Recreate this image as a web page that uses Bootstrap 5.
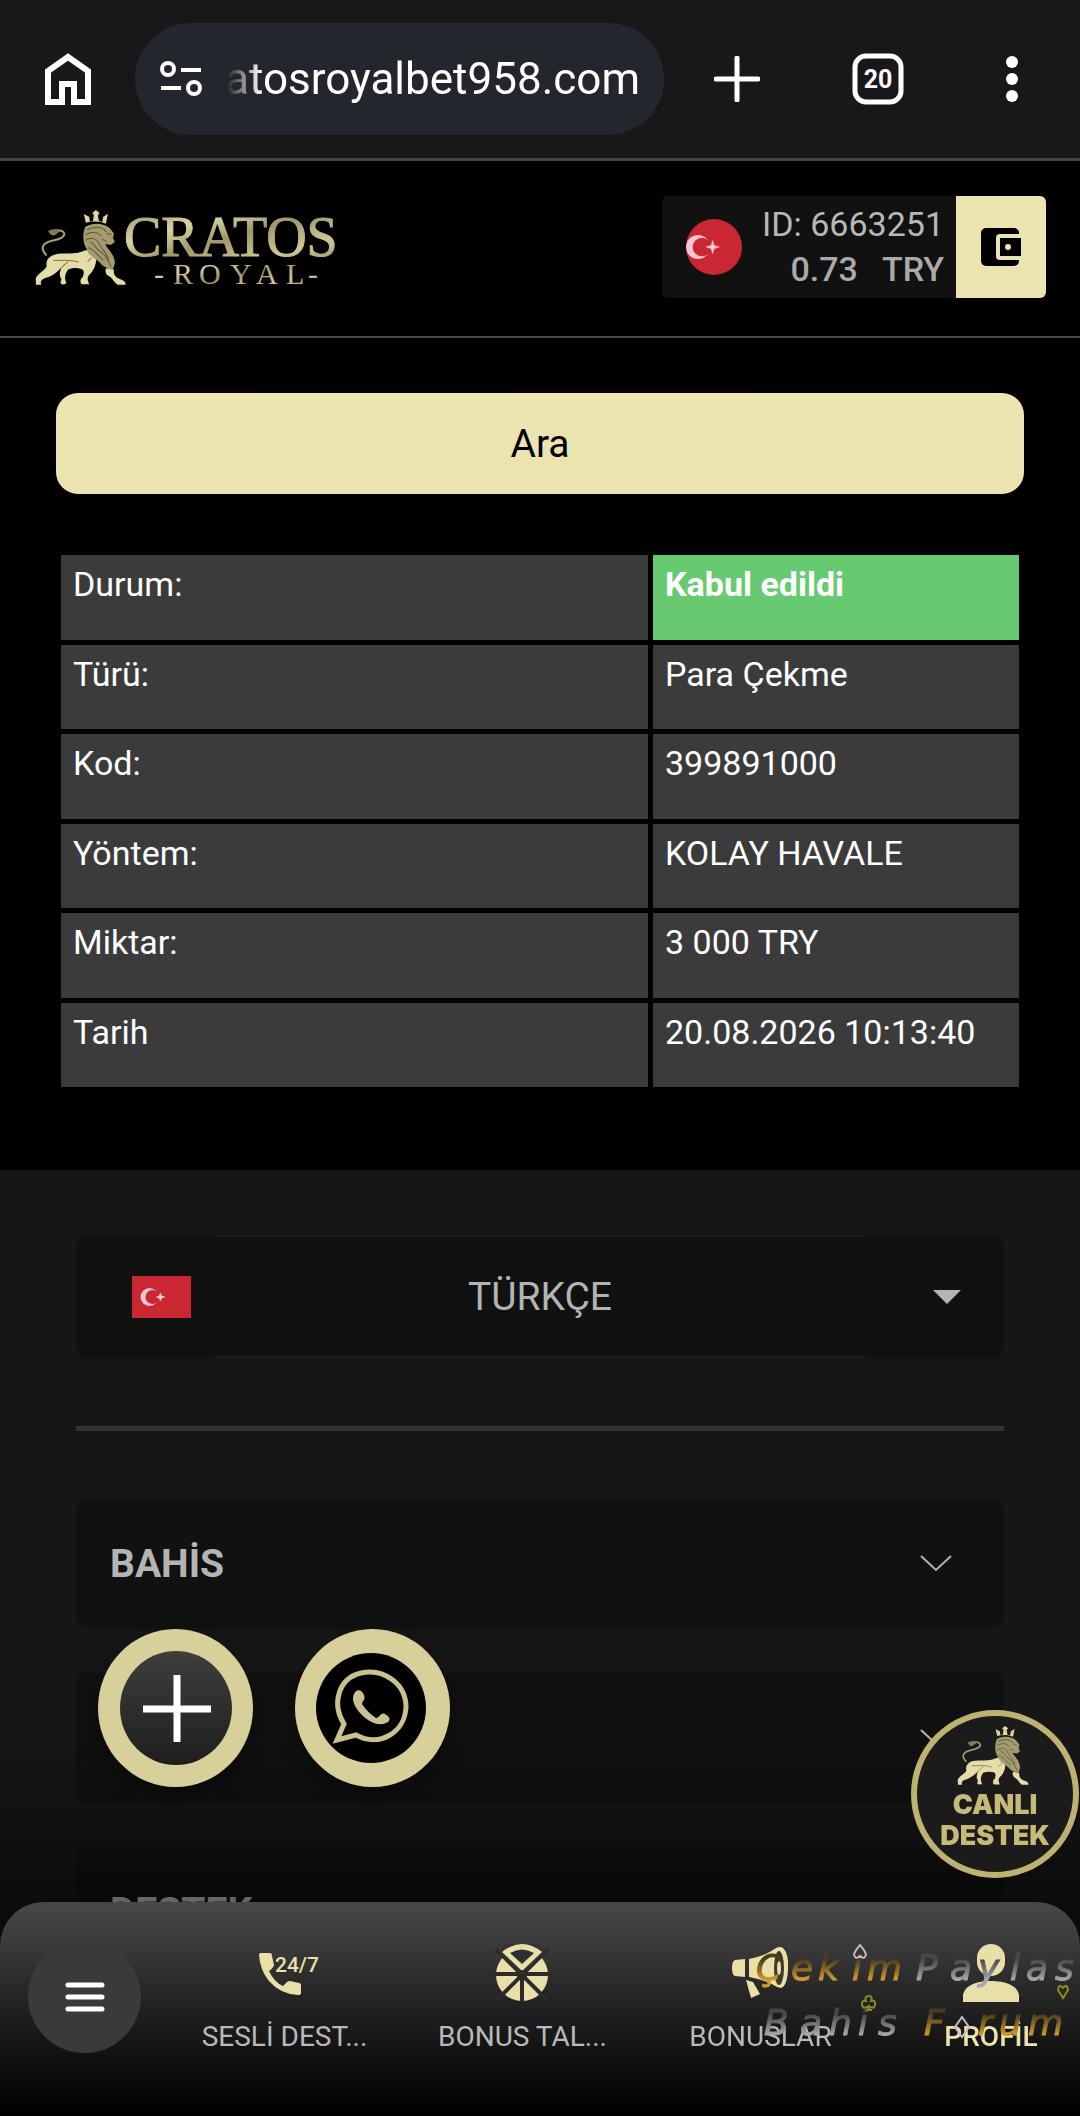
<!DOCTYPE html>
<html lang="tr">
<head>
<meta charset="utf-8">
<meta name="viewport" content="width=device-width, initial-scale=1">
<title>Cratos Royal</title>
<link href="https://cdn.jsdelivr.net/npm/bootstrap@5.3.0/dist/css/bootstrap.min.css" rel="stylesheet">
<style>
  body { background: #161616; font-family: Roboto, "Liberation Sans", sans-serif; color: #b4b4b4; }
  svg { display: block; flex: none; }
  button, .plain-input { border: 0; padding: 0; background: none; color: inherit; }

  /* browser bar */
  .browser-bar { height: 161px; padding: 0 61px 0 45px; background: #18181b; border-bottom: 3px solid #454547; color: #fff; }
  .address { height: 112px; margin-left: 44px; padding: 0 24px; border-radius: 56px; background: #24262e; flex: 0 1 529px; min-width: 0; gap: 14px; }
  .address input { font-size: 44px; line-height: 56px; color: #fff; outline: 0; min-width: 0; text-align: right;
    -webkit-mask-image: linear-gradient(90deg, transparent 10px, #000 44px); mask-image: linear-gradient(90deg, transparent 10px, #000 44px); }
  .browser-tools { flex: 1; margin-left: 50px; }
  .tab-count { margin-right: 10px; }

  /* site header */
  .site-head { background: #000; height: 177px; padding: 0 34px 4px; border-bottom: 2px solid #48484a; }
  .account { height: 102px; border-radius: 6px; overflow: hidden; background: #111; color: #b8b8b8; }
  .account-main { gap: 20px; }
  .account-id { font-size: 34px; line-height: 45px; }
  .account-id b { font-weight: 500; color: #aaa; }
  .wallet { width: 90px; background: #ebe4b0; color: #000; }

  /* history */
  .history { background: #000; padding: 55px 56px 78px; }
  .search-btn { height: 101px; border-radius: 22px; background: linear-gradient(#efe6b0, #ebe4b0 30%); color: #000; font-size: 39px; line-height: 48px; }
  .detail-grid { width: 100%; height: 542px; margin-top: 56px; border-collapse: separate; border-spacing: 5px; color: #fff; font-size: 34px; line-height: 40px; }
  .detail-grid th, .detail-grid td { background: #3b3b3b; padding: 9px 12px; vertical-align: top; font-weight: 400; }
  .detail-grid th { width: 587px; }
  .detail-grid td.accepted { background: #68ca70; font-weight: 700; }

  /* menu */
  .menu-area { padding: 65px 76px 141px; }
  .lang { width: 100%; height: 123px; border-radius: 8px; background: #111; overflow: hidden; font-size: 39px; line-height: 48px; }
  .lang-side { width: 139px; }
  .lang-name { border: solid #1e1e1e; border-width: 2px 0; }
  .menu-rule { height: 5px; margin: 68px 0; border: 0; background: #333; opacity: 1; }
  .fold { width: 100%; height: 129px; margin-bottom: 45px; padding: 0 52px 0 34px; border-radius: 8px; background: #111; font-size: 39px; line-height: 48px; font-weight: 700; }
  .fold:last-child { margin-bottom: 0; }

  /* floating layer */
  .fade-out { left: 0; right: 0; bottom: 170px; height: 200px; background: linear-gradient(transparent, rgba(0,0,0,.45) 80%); pointer-events: none; }
  .floaters { left: 98px; bottom: 329px; gap: 42px; z-index: 2; }
  .round-btn { width: 155px; height: 158px; border-radius: 50%; background: #d8d09a; box-shadow: 0 8px 20px rgba(0,0,0,.4); }
  .live-help { right: 0; bottom: 237px; z-index: 3; }

  .dock { height: 214px; padding: 38px 12px 62px 28px; border-radius: 44px 44px 0 0; background: linear-gradient(#484848 0, #3a3a3a 20%, #242424 45%, #111 72%, #000 100%); }
  .menu-btn { width: 113px; height: 113px; border-radius: 50%; background: #3a3a3a; flex: none; }
  .dock-items { margin: 4px 0 0 60px; gap: 70px; }
  .dock-items a { flex: 0 1 167px; color: #b9b9b9; font-size: 28px; line-height: 36px; text-decoration: none; white-space: nowrap; }
  .dock-items a:last-child { flex: 1 1 0; color: #ebe4b0; font-weight: 500; }
  .dock-items svg { margin-bottom: 17px; color: #e8e0a8; }
  .stamp { right: 0; bottom: 28px; z-index: 1040; pointer-events: none; }
</style>
</head>
<body>

<svg width="0" height="0" class="position-absolute" aria-hidden="true">
  <defs>
    <linearGradient id="gold" x1="0" y1="0" x2="1" y2="1">
      <stop offset="0" stop-color="#8e8762"/><stop offset=".3" stop-color="#d9d2a2"/><stop offset=".5" stop-color="#a0986c"/><stop offset=".75" stop-color="#cfc793"/><stop offset="1" stop-color="#958d66"/>
    </linearGradient>
    <symbol id="lion" viewBox="45 60 272 224">
      <path d="M78 194C58 172 70 158 96 152C122 147 138 138 131 127C124 118 108 120 100 124" fill="none" stroke="#aaa27a" stroke-width="6" stroke-linecap="round"/>
      <path d="M84 124C94 115 114 116 122 124C112 126 105 140 94 135C88 132 90 128 84 124Z" fill="#807a58"/>
      <path d="M192 182C165 195 130 187 105 193C84 199 76 214 80 228C74 243 50 250 47 266L48 283H64C58 273 68 264 84 261C105 253 116 240 124 232C119 246 116 256 124 266L121 277C126 285 135 283 139 278C132 265 134 250 145 237C160 233 170 232 183 236C195 240 190 252 188 260C181 263 178 275 184 282H207C203 272 199 263 207 254C219 243 228 226 228 205L215 176Z" fill="#e4dda8"/>
      <path d="M257 234L281 238C278 253 287 263 302 268C312 271 316 277 316 283H292C284 280 279 267 268 259C259 254 253 247 257 234Z" fill="#e4dda8"/>
      <path d="M195 110C222 95 252 100 268 114L281 130L278 145L284 155L273 164L255 162C262 178 283 190 284 220C279 228 281 235 275 240C263 233 249 232 239 217C224 203 205 198 199 176C187 158 187 131 195 110Z" fill="#a39b6e"/>
      <path d="M202 118C230 107 248 112 258 125M198 133C218 122 233 126 242 137M197 150C215 139 230 146 236 159C244 178 260 187 264 207M205 173C217 176 230 192 248 208M211 155C225 163 228 178 244 187C258 197 265 213 272 228M246 148L259 153M261 130L272 133" fill="none" stroke="#5b5640" stroke-width="3" stroke-linecap="round"/>
      <path d="M197 98L191 72L207 80L209 94L218 93L221 75L216 69L227 60L238 69L233 76L236 93L246 96L249 80L263 71L257 101C238 93 216 93 197 98Z" fill="#ddd5a3"/>
      <path d="M100 211C125 211 150 207 176 216M202 214L214 202M144 214C135 220 130 228 124 232" fill="none" stroke="#7e7753" stroke-width="3"/>
    </symbol>
    <symbol id="flag" viewBox="0 0 60 42" preserveAspectRatio="xMidYMid slice">
      <rect width="60" height="42" fill="#c92833"/>
      <circle cx="18" cy="21" r="9" fill="#f3c6d3"/><circle cx="21" cy="21" r="7" fill="#c92833"/>
      <path d="M25 21l3-1 1-3 1 3 3 1-3 1-1 3-1-3z" fill="#f6dbe1" stroke="#f0b8c4"/>
    </symbol>
    <symbol id="chev" viewBox="0 0 32 18"><path d="M1 1L16 15L31 1" fill="none" stroke="#b4b4b4" stroke-width="2"/></symbol>
  </defs>
</svg>

<div class="browser-bar d-flex align-items-center">
  <button type="button" aria-label="Ana sayfa"><svg width="46" height="52" viewBox="0 0 46 52"><path d="M3 49V18L23 4L43 18V49H29V31H17V49Z" fill="none" stroke="#fff" stroke-width="6"/></svg></button>
  <div class="address d-flex align-items-center">
    <svg width="44" height="38" viewBox="0 0 44 38" fill="none" stroke="#fff" stroke-width="4"><circle cx="9" cy="9" r="6"/><path d="M22 10H42M2 28H22"/><circle cx="35" cy="28" r="6"/></svg>
    <input class="plain-input w-100" type="text" aria-label="Adres" value="atosroyalbet958.com">
  </div>
  <div class="browser-tools d-flex align-items-center justify-content-between">
    <button type="button" aria-label="Yeni sekme"><svg width="46" height="46" viewBox="0 0 46 46"><path d="M23 2V44M2 23H44" stroke="#fff" stroke-width="5" stroke-linecap="round"/></svg></button>
    <button type="button" class="tab-count" aria-label="20 sekme"><svg width="52" height="52" viewBox="0 0 52 52"><rect x="3" y="3" width="46" height="46" rx="11" fill="none" stroke="#fff" stroke-width="5"/><text x="26" y="35" text-anchor="middle" font-size="25" font-weight="700" fill="#fff">20</text></svg></button>
    <button type="button" aria-label="Menü"><svg width="14" height="48" viewBox="0 0 14 48" fill="#fff"><circle cx="7" cy="7" r="6"/><circle cx="7" cy="24" r="6"/><circle cx="7" cy="41" r="6"/></svg></button>
  </div>
</div>

<header class="site-head d-flex align-items-center justify-content-between">
  <a href="#" aria-label="Cratos Royal">
    <svg class="overflow-visible" width="304" height="78" viewBox="0 0 304 78">
      <use href="#lion" x="1" y="2" width="91" height="75"/>
      <g fill="url(#gold)" font-family="Liberation Serif, serif">
        <text x="90" y="48" font-size="56" stroke="url(#gold)">CRATOS</text>
        <text x="120 139 165 196 222 252 274" y="76" font-size="30">-ROYAL-</text>
      </g>
    </svg>
  </a>
  <div class="account d-flex">
    <div class="account-main d-flex align-items-center ps-4">
      <svg class="rounded-circle" width="56" height="56"><use href="#flag" width="56" height="56"/></svg>
      <div class="account-id text-end pe-2">
        <div class="pe-1">ID: 6663251</div>
        <b class="d-flex justify-content-end gap-4 pe-1"><span>0.73</span><span>TRY</span></b>
      </div>
    </div>
    <button type="button" class="wallet d-flex align-items-center justify-content-center" aria-label="Cüzdan">
      <svg width="42" height="38" viewBox="0 0 42 38"><rect x="1" width="38" height="38" rx="5"/><path d="M42 6H20Q16 6 16 10V28Q16 32 20 32H42Z" fill="#ebe4b0"/><path d="M20 10H41V28H20Z"/><circle cx="28" cy="19" r="3" fill="#ebe4b0"/></svg>
    </button>
  </div>
</header>

<main>
  <section class="history">
    <button type="button" class="search-btn w-100 d-block">Ara</button>
    <table class="detail-grid">
      <tr><th scope="row">Durum:</th><td class="accepted">Kabul edildi</td></tr>
      <tr><th scope="row">Türü:</th><td>Para Çekme</td></tr>
      <tr><th scope="row">Kod:</th><td>399891000</td></tr>
      <tr><th scope="row">Yöntem:</th><td>KOLAY HAVALE</td></tr>
      <tr><th scope="row">Miktar:</th><td>3 000 TRY</td></tr>
      <tr><th scope="row">Tarih</th><td>20.08.2026 10:13:40</td></tr>
    </table>
  </section>

  <section class="menu-area">
    <button type="button" class="lang d-flex align-items-stretch">
      <span class="lang-side d-flex align-items-center justify-content-end pe-4"><svg width="59" height="42"><use href="#flag" width="59" height="42"/></svg></span>
      <span class="lang-name flex-fill d-flex align-items-center justify-content-center">TÜRKÇE</span>
      <span class="lang-side d-flex align-items-center justify-content-center"><svg class="ms-4" width="28" height="14" viewBox="0 0 28 14"><path d="M0 0H28L14 14Z" fill="#b4b4b4"/></svg></span>
    </button>
    <hr class="menu-rule">
    <button type="button" class="fold d-flex align-items-center justify-content-between">BAHİS<svg width="32" height="18"><use href="#chev" width="32" height="18"/></svg></button>
    <button type="button" class="fold d-flex align-items-center justify-content-end" aria-label="Menü bölümü"><svg width="32" height="18"><use href="#chev" width="32" height="18"/></svg></button>
    <button type="button" class="fold d-flex align-items-center justify-content-between">DESTEK<svg width="32" height="18"><use href="#chev" width="32" height="18"/></svg></button>
  </section>
</main>

<div class="fade-out position-fixed"></div>

<div class="floaters position-fixed d-flex">
  <button type="button" class="round-btn d-flex align-items-center justify-content-center" aria-label="Ekle">
    <svg width="112" height="114" viewBox="0 0 112 114">
      <defs><linearGradient id="knob" x1="0" y1="0" x2="0" y2="1"><stop offset="0" stop-color="#3e3e3f"/><stop offset="1" stop-color="#1e1e1f"/></linearGradient></defs>
      <ellipse cx="56" cy="57" rx="56" ry="57" fill="url(#knob)"/><path d="M57 24V91M23 58H91" stroke="#fff" stroke-width="7"/></svg>
  </button>
  <button type="button" class="round-btn d-flex align-items-center justify-content-center" aria-label="WhatsApp">
    <svg width="114" height="112" viewBox="0 0 114 112">
      <circle cx="55" cy="56" r="55" fill="#000"/>
      <path d="M21 88L28 72C15 51 23 26 45 21C68 16 90 32 90 55C89 80 64 96 40 83Z" fill="none" stroke="#c9c28f" stroke-width="5"/>
      <path d="M38 42C41 36 46 38 48 43C50 48 46 49 46 52C50 58 54 62 60 66C64 66 64 60 69 62C75 65 75 69 70 71C62 75 51 69 44 61C39 55 35 48 38 42Z" fill="#c9c28f"/>
    </svg>
  </button>
</div>

<button type="button" class="live-help position-fixed" aria-label="Canlı destek">
  <svg width="169" height="169" viewBox="0 0 169 169">
    <circle cx="84" cy="84" r="81" fill="#1b1b1b" stroke="#beb272" stroke-width="6"/>
    <use href="#lion" x="46" y="16" width="72" height="59"/>
    <g fill="#c6ba78" font-family="Inter, sans-serif" font-weight="900" font-size="27" text-anchor="middle"><text x="84" y="104">CANLI</text><text x="84" y="135">DESTEK</text></g>
  </svg>
</button>

<nav class="dock fixed-bottom d-flex align-items-start">
  <button type="button" class="menu-btn d-flex align-items-center justify-content-center" aria-label="Menü">
    <svg width="40" height="30" viewBox="0 0 40 30"><path d="M3 3H37M3 15H37M3 27H37" stroke="#fff" stroke-width="5" stroke-linecap="round"/></svg>
  </button>
  <div class="dock-items d-flex flex-fill">
    <a href="#" class="d-flex flex-column align-items-center">
      <svg class="overflow-visible" width="66" height="58" viewBox="-6 0 66 58" fill="currentColor"><path d="M3 9H12Q14 9 14 12L16 21Q16 23 11 27Q16 38 25 42L29 38Q30 37 32 37L41 39Q43 39 43 41V49Q43 51 40 51Q22 50 11 37Q2 26 1 11Q1 9 3 9Z"/><text x="17" y="28" font-size="21" font-weight="500">24/7</text></svg>
      <span>SESLİ DEST...</span>
    </a>
    <a href="#" class="d-flex flex-column align-items-center">
      <svg width="58" height="58" viewBox="0 0 58 58"><circle cx="29" cy="31" r="26" fill="currentColor"/><path d="M29 31V60M0 30H58M3 5L54 56M55 5L4 56" stroke="#2b2b2b" stroke-width="4"/><path d="M29 31L5 7L16 -4H42L53 7Z" fill="#333"/><path d="M29 27L9 8Q19 0 29 0T49 8Z" fill="currentColor"/><path d="M29 20L17 9Q29 2 41 9Z" fill="#2f2f2f"/><circle cx="29" cy="31" r="5" fill="#2b2b2b"/></svg>
      <span>BONUS TAL...</span>
    </a>
    <a href="#" class="d-flex flex-column align-items-center">
      <svg width="58" height="58" viewBox="0 0 58 58"><path d="M4 16L14 15V33L4 32Q1 31 1 24T4 16ZM18 15Q34 12 45 4Q49 2 52 4Q58 9 57 26Q56 42 50 44L46 43Q35 36 18 33Z" fill="currentColor"/><path d="M15 36L22 38L29 50L20 54Z" fill="currentColor"/><ellipse cx="48" cy="24" rx="5" ry="17" fill="#3b3a2c"/><ellipse cx="48" cy="24" rx="2" ry="7" fill="currentColor"/></svg>
      <span>BONUSLAR</span>
    </a>
    <a href="#" class="d-flex flex-column align-items-center">
      <svg width="58" height="58" viewBox="0 0 58 58" fill="currentColor"><rect x="15" y="0" width="28" height="32" rx="14"/><path d="M1 58V51C3 41 15 37 29 37S55 41 57 51V58Z"/></svg>
      <span>PROFİL</span>
    </a>
  </div>
</nav>

<svg class="stamp position-fixed" width="330" height="162" viewBox="0 0 330 162" role="img" aria-label="Çekim Paylas Bahis Forum">
  <defs>
    <linearGradient id="amber" x1="0" y1="0" x2="0" y2="1"><stop offset=".3" stop-color="#4a3c1c"/><stop offset=".8" stop-color="#d29a2c"/></linearGradient>
    <linearGradient id="silver" x1="0" y1="0" x2="0" y2="1"><stop offset=".3" stop-color="#48464a"/><stop offset=".8" stop-color="#aaa5ae"/></linearGradient>
  </defs>
  <g font-family="DejaVu Sans, sans-serif" font-style="italic" font-size="36">
    <text fill="url(#amber)" stroke="url(#amber)" x="6 41 68 102 117" y="54">Çekim</text>
    <text fill="url(#silver)" stroke="url(#silver)" x="166 200 228 260 276 305" y="54">Paylas</text>
    <text fill="url(#silver)" stroke="url(#silver)" x="14 50 79 108 128" y="109">Bahis</text>
    <text fill="url(#amber)" stroke="url(#amber)" x="174 228 249 278" y="109">Frum</text>
  </g>
  <g fill="none" stroke-width="2">
    <path d="M110 19C106 24 104 26 104 29Q106 34 110 30Q114 34 116 29C116 26 114 24 110 19Z" stroke="#c9b9c0"/>
    <path d="M212 91L219 101L212 111L205 101Z" stroke="#c9b9c0"/>
    <path d="M313 72L308 64Q309 57 313 62Q317 57 318 64Z" stroke="#8e8a20"/>
    <path d="M119 84V80Q112 84 112 78Q112 74 116 75Q114 70 119 70Q123 70 121 75Q126 74 125 79Q124 84 119 80M116 84H122" stroke="#8e8a20"/>
  </g>
</svg>

<script src="https://cdn.jsdelivr.net/npm/bootstrap@5.3.0/dist/js/bootstrap.bundle.min.js"></script>
</body>
</html>
